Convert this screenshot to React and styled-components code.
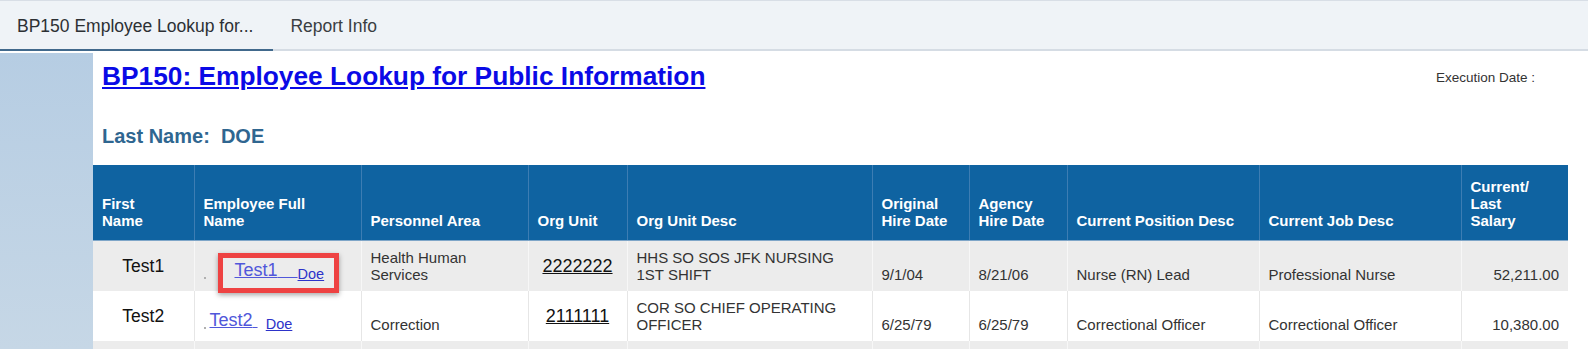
import React from 'react';
import styled, { createGlobalStyle } from 'styled-components';

const GlobalStyle = createGlobalStyle`
  html, body {
    margin: 0;
    padding: 0;
    background: #fff;
  }
  body {
    font-family: "Liberation Sans", Arial, sans-serif;
    color: #333;
  }
`;

const Page = styled.div`
  display: flex;
  flex-direction: column;
  height: 100vh;
  overflow: hidden;
`;

const TabBar = styled.div`
  display: flex;
  height: 48px;
  flex-shrink: 0;
  background: #eff3f7;
  border-top: 1px solid #d8dee6;
  border-bottom: 2px solid #d5dce4;
  margin-bottom: 2px;
`;

const Tab = styled.div`
  display: flex;
  align-items: center;
  padding: 3px 20px 0 17px;
  margin-bottom: -2px;
  border-bottom: 2px solid ${p => (p.$active ? '#41698c' : 'transparent')};
  font-size: 17.5px;
  color: ${p => (p.$active ? '#2c3034' : '#3a3e42')};
  white-space: nowrap;
`;

const Body = styled.div`
  display: flex;
  flex: 1;
  min-height: 0;
`;

const Sidebar = styled.div`
  width: 93px;
  flex-shrink: 0;
  background: linear-gradient(180deg, #b6cde3 0%, #c6d7e6 100%);
`;

const Content = styled.div`
  flex: 1;
  min-width: 0;
  padding-right: 20px;
`;

const TitleRow = styled.div`
  display: flex;
  justify-content: space-between;
  align-items: flex-start;
  padding: 8px 0 0 9px;
`;

const Title = styled.a`
  font-size: 26.3px;
  line-height: 30px;
  font-weight: bold;
  color: #0a0ae6;
  text-decoration: underline;
`;

const ExecDate = styled.div`
  font-size: 13.5px;
  line-height: 16px;
  color: #333;
  padding: 9px 33px 0 0;
`;

const LastName = styled.div`
  font-size: 20px;
  line-height: 24px;
  font-weight: bold;
  color: #2f6690;
  margin: 33px 0 17px 9px;
`;

const Table = styled.table`
  width: 100%;
  border-collapse: collapse;
  table-layout: fixed;
`;

const Th = styled.th`
  background: #0f63a1;
  color: #fff;
  font-size: 15px;
  line-height: 17px;
  font-weight: bold;
  text-align: left;
  vertical-align: bottom;
  padding: 13px 9px 11px;
  border-left: 1px solid #3d7db3;
  border-bottom: 1px solid #7fa6c8;

  &:first-child {
    border-left: none;
  }
`;

const Row = styled.tr`
  background: ${p => (p.$striped ? '#ececec' : '#fff')};
`;

const Td = styled.td`
  font-size: 15px;
  line-height: 17px;
  color: #333;
  padding: 8px 12px 8px 9px;
  vertical-align: bottom;
  text-align: left;
  border-left: 1px solid ${p => (p.$striped ? '#f7f7f7' : '#e6e6e6')};
  height: 34px;

  &:first-child {
    border-left: none;
  }
`;

const FirstNameCell = styled(Td)`
  font-size: 17.5px;
  color: #111;
  text-align: center;
  vertical-align: middle;
  padding: 8px 9px;
`;

const OrgUnitCell = styled(Td)`
  font-size: 18px;
  color: #111;
  text-decoration: underline;
  text-align: center;
  vertical-align: middle;
  padding: 8px 9px;
`;

const SalaryCell = styled(Td)`
  text-align: right;
  padding-right: 9px;
`;

const Dot = styled.span`
  display: inline-block;
  width: 2px;
  height: 2px;
  background: #b0b0b0;
  margin-right: ${p => p.$gap}px;
`;

const Highlight = styled.span`
  position: relative;
  display: inline-block;

  &::after {
    content: '';
    position: absolute;
    top: -9px;
    bottom: -10px;
    left: -17px;
    right: -15px;
    border: 5px solid #ee4242;
    box-shadow: 0 2px 5px rgba(0, 0, 0, 0.35);
    z-index: 1;
    pointer-events: none;
  }
`;

const FirstLink = styled.a`
  font-size: 18px;
  color: #5057da;
  text-decoration: underline;
  vertical-align: 3px;
`;

const LastLink = styled.a`
  font-size: 14.5px;
  color: #2d33c9;
  text-decoration: underline;
  margin-left: ${p => p.$offset || 0}px;
`;

const columns = [
  { label: ['First', 'Name'], width: 101 },
  { label: ['Employee Full', 'Name'], width: 167 },
  { label: ['Personnel Area'], width: 167 },
  { label: ['Org Unit'], width: 99 },
  { label: ['Org Unit Desc'], width: 245 },
  { label: ['Original', 'Hire Date'], width: 97 },
  { label: ['Agency', 'Hire Date'], width: 98 },
  { label: ['Current Position Desc'], width: 192 },
  { label: ['Current Job Desc'], width: 202 },
  { label: ['Current/', 'Last', 'Salary'] },
];

const employees = [
  {
    first: 'Test1',
    last: 'Doe',
    highlight: true,
    area: 'Health Human Services',
    unit: '2222222',
    unitDesc: 'HHS SO SOS JFK NURSING 1ST SHIFT',
    origHire: '9/1/04',
    agencyHire: '8/21/06',
    position: 'Nurse (RN) Lead',
    job: 'Professional Nurse',
    salary: '52,211.00',
  },
  {
    first: 'Test2',
    last: 'Doe',
    highlight: false,
    area: 'Correction',
    unit: '2111111',
    unitDesc: 'COR SO CHIEF OPERATING OFFICER',
    origHire: '6/25/79',
    agencyHire: '6/25/79',
    position: 'Correctional Officer',
    job: 'Correctional Officer',
    salary: '10,380.00',
  },
];

const FullName = ({ emp }) => {
  const links = (
    <>
      <FirstLink href="#">
        {emp.first}
        {emp.highlight ? '\u00a0\u00a0\u00a0\u00a0' : '\u00a0'}
      </FirstLink>
      {!emp.highlight && ' '}
      <LastLink href="#" $offset={emp.highlight ? 0 : 4}>
        {emp.last}
      </LastLink>
    </>
  );
  return (
    <>
      <Dot $gap={emp.highlight ? 29 : 4} />
      {emp.highlight ? <Highlight>{links}</Highlight> : links}
    </>
  );
};

const App = () => {
  return (
    <Page>
      <GlobalStyle />
      <TabBar>
        <Tab $active>BP150 Employee Lookup for...</Tab>
        <Tab>Report Info</Tab>
      </TabBar>
      <Body>
        <Sidebar />
        <Content>
          <TitleRow>
            <Title href="#">BP150: Employee Lookup for Public Information</Title>
            <ExecDate>Execution Date :</ExecDate>
          </TitleRow>
          <LastName>Last Name:&nbsp; DOE</LastName>
          <Table>
            <colgroup>
              {columns.map((c, i) => (
                <col key={i} style={c.width ? { width: c.width } : undefined} />
              ))}
            </colgroup>
            <thead>
              <tr>
                {columns.map((c, i) => (
                  <Th key={i}>
                    {c.label.map((l, j) => (
                      <React.Fragment key={j}>
                        {j > 0 && <br />}
                        {l}
                      </React.Fragment>
                    ))}
                  </Th>
                ))}
              </tr>
            </thead>
            <tbody>
              {employees.map((emp, i) => {
                const striped = i % 2 === 0;
                return (
                  <Row key={emp.first} $striped={striped}>
                    <FirstNameCell $striped={striped}>{emp.first}</FirstNameCell>
                    <Td $striped={striped}>
                      <FullName emp={emp} />
                    </Td>
                    <Td $striped={striped}>{emp.area}</Td>
                    <OrgUnitCell $striped={striped}>{emp.unit}</OrgUnitCell>
                    <Td $striped={striped}>{emp.unitDesc}</Td>
                    <Td $striped={striped}>{emp.origHire}</Td>
                    <Td $striped={striped}>{emp.agencyHire}</Td>
                    <Td $striped={striped}>{emp.position}</Td>
                    <Td $striped={striped}>{emp.job}</Td>
                    <SalaryCell $striped={striped}>{emp.salary}</SalaryCell>
                  </Row>
                );
              })}
              <Row $striped>
                {columns.map((c, i) => (
                  <Td key={i} $striped />
                ))}
              </Row>
            </tbody>
          </Table>
        </Content>
      </Body>
    </Page>
  );
};

export default App;
